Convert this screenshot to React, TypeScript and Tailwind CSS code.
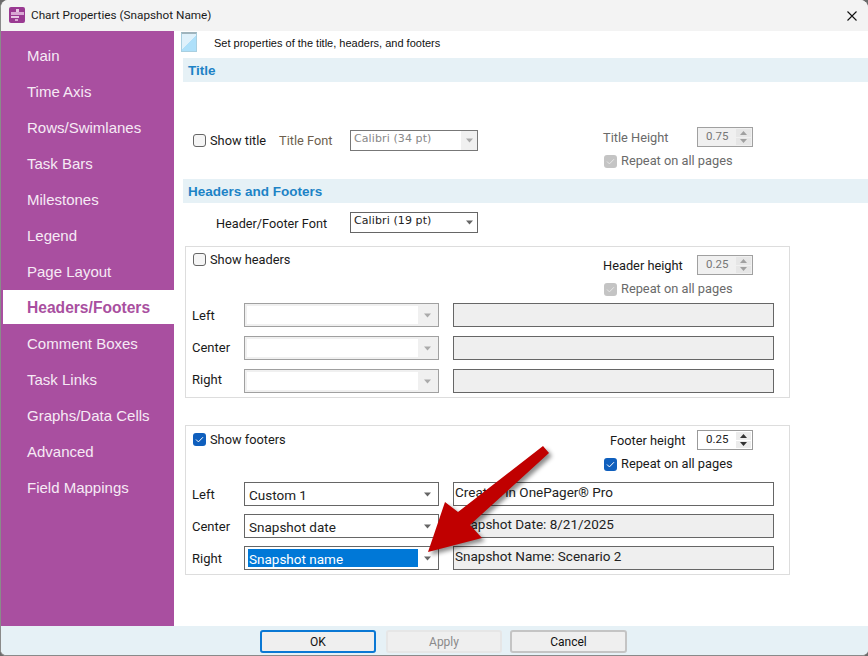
// App.tsx
const navItems = [
  "Main",
  "Time Axis",
  "Rows/Swimlanes",
  "Task Bars",
  "Milestones",
  "Legend",
  "Page Layout",
  "Headers/Footers",
  "Comment Boxes",
  "Task Links",
  "Graphs/Data Cells",
  "Advanced",
  "Field Mappings",
];

const Caret = ({ disabled = false }: { disabled?: boolean }) => (
  <svg width="9" height="5" viewBox="0 0 9 5" className="shrink-0">
    <path d="M1 0.5h7L4.5 4.5z" fill={disabled ? "#aaaaaa" : "#666666"} />
  </svg>
);

const Check = ({ checked = false, disabled = false }: { checked?: boolean; disabled?: boolean }) => {
  if (!checked) {
    return <span className="block h-[13px] w-[13px] shrink-0 rounded-[3px] border border-[#666666] bg-[#f5f5f5]" />;
  }
  return (
    <span
      className={`flex h-[13px] w-[13px] shrink-0 items-center justify-center rounded-[3px] ${
        disabled ? "bg-[#c4c4c4]" : "bg-[#0f5fbd]"
      }`}
    >
      <svg width="9" height="7" viewBox="0 0 9 7">
        <path d="M1 3.5l2.4 2.4L8 1.2" fill="none" stroke={disabled ? "#e8e8e8" : "#ffffff"} strokeWidth="1" />
      </svg>
    </span>
  );
};

const Spinner = ({ value, disabled = false }: { value: string; disabled?: boolean }) => (
  <div
    className={`flex h-5 w-14 items-center border pl-[8px] pr-[1px] ${
      disabled ? "border-[#a0a0a0] bg-[#f0f0f0] text-[#777777]" : "border-[#9a9a9a] bg-white text-[#222222]"
    }`}
  >
    <span className="w-[22px] text-center text-[11.5px] leading-none">{value}</span>
    <div className="ml-auto flex h-full w-[15px] flex-col justify-center gap-[1px] py-[1px]">
      <div className={`flex flex-1 items-center justify-center ${disabled ? "bg-[#e6e6e6]" : "bg-[#ececec]"}`}>
        <svg width="7" height="4" viewBox="0 0 7 4">
          <path d="M3.5 0L7 4H0z" fill={disabled ? "#a0a0a0" : "#333333"} />
        </svg>
      </div>
      <div className={`flex flex-1 items-center justify-center ${disabled ? "bg-[#e6e6e6]" : "bg-[#ececec]"}`}>
        <svg width="7" height="4" viewBox="0 0 7 4">
          <path d="M0 0h7L3.5 4z" fill={disabled ? "#a0a0a0" : "#333333"} />
        </svg>
      </div>
    </div>
  </div>
);

const FontCombo = ({ label, disabled = false }: { label: string; disabled?: boolean }) => (
  <div
    className={`flex h-[21px] w-[128px] border bg-white ${disabled ? "border-[#777777]" : "border-[#666666]"}`}
  >
    <span
      className={`flex-1 pl-[3px] pt-[1px] font-['DejaVu_Sans',sans-serif] text-[11px] leading-[14px] tracking-[0.1px] ${
        disabled ? "text-[#888888]" : "text-[#222222]"
      }`}
    >
      {label}
    </span>
    <span className={`flex w-[16px] items-center justify-center ${disabled ? "bg-[#f0f0f0]" : ""}`}>
      <Caret disabled={disabled} />
    </span>
  </div>
);

const Combo = ({ value, selected = false, disabled = false }: { value?: string; selected?: boolean; disabled?: boolean }) => (
  <div
    className={`flex h-6 w-[195px] items-center border p-[2px] ${
      disabled ? "border-[#a0a0a0] bg-[#f0f0f0]" : "border-[#666666] bg-white"
    }`}
  >
    <span
      className={`h-[18px] flex-1 pt-[1px] text-[13.5px] leading-[18px] ${
        selected ? "ml-[1px] bg-[#0078d7] pl-[1px] text-white" : disabled ? "bg-white" : "pl-[2px] text-[#222222]"
      }`}
    >
      {value}
    </span>
    <span className="flex w-[18px] items-center justify-center">
      <Caret disabled={disabled} />
    </span>
  </div>
);

const Field = ({ value, readOnly = true }: { value?: string; readOnly?: boolean }) => (
  <div
    className={`ml-[14px] h-6 w-[321px] border border-[#666666] pl-[1px] text-[13.5px] leading-[19px] text-[#222222] ${
      readOnly ? "bg-[#efefef]" : "bg-white"
    }`}
  >
    {value}
  </div>
);

const Row = ({ label, labelClass = "", children }: { label: string; labelClass?: string; children: React.ReactNode }) => (
  <div className="flex items-center">
    <span className={`w-[52px] text-[13px] leading-none text-[#1a1a1a] ${labelClass}`}>{label}</span>
    {children}
  </div>
);

const Band = ({ label }: { label: string }) => (
  <div className="ml-[9px] h-6 bg-[#e6f1f6] pl-[5px] pt-[1px] text-[13.5px] font-bold leading-[24px] text-[#1d83c6] font-['Liberation_Sans',sans-serif]">
    {label}
  </div>
);

const Repeat = ({ checked = false, disabled = false }: { checked?: boolean; disabled?: boolean }) => (
  <div className={`mt-2 flex items-center gap-1 pl-[1px] text-[12.8px] leading-none ${disabled ? "text-[#6a6a6a]" : "text-[#1a1a1a]"}`}>
    <Check checked={checked} disabled={disabled} />
    <span>Repeat on all pages</span>
  </div>
);

const DialogButton = ({ label, className }: { label: string; className: string }) => (
  <button className={`h-[23px] rounded-[3px] border-2 bg-[#efefef] text-[12px] leading-none ${className}`}>
    {label}
  </button>
);

export default function App() {
  return (
    <div className="relative h-[656px] w-[868px] overflow-hidden bg-[#6b6b6b] font-['Roboto','Noto_Sans',sans-serif]">
      <div className="flex h-full flex-col overflow-hidden rounded-t-[8px] rounded-b-[6px] border-b border-l border-[#8a8a8a] bg-white">
        {/* title bar */}
        <div className="flex h-[31px] shrink-0 items-center bg-[#f3f3f3] pl-2 pr-[10px]">
          <svg width="17" height="17" viewBox="0 0 17 17">
            <rect width="16" height="16" rx="2" fill="#9a3a92" />
            <rect x="7" y="2" width="3" height="3" fill="#e8c8e4" />
            <rect x="2" y="5" width="13" height="3" fill="#d9a8d4" />
            <rect x="2" y="9" width="8" height="2" fill="#e8c8e4" />
            <rect x="6" y="12" width="3" height="2" fill="#d9a8d4" />
          </svg>
          <span className="ml-[5px] text-[11.75px] text-[#1a1a1a]">Chart Properties (Snapshot Name)</span>
          <svg width="10" height="10" viewBox="0 0 10 10" className="ml-auto mr-[1px]">
            <path d="M0.5 0.5l9 9M9.5 0.5l-9 9" stroke="#111111" strokeWidth="1.1" />
          </svg>
        </div>

        <div className="flex min-h-0 flex-1">
          {/* sidebar */}
          <nav className="w-[173px] shrink-0 bg-[#a94fa0] pt-[7px] font-['Liberation_Sans',sans-serif]">
            {navItems.map((item) =>
              item === "Headers/Footers" ? (
                <div key={item} className="mb-[2px] ml-[2px] h-[34px] bg-white pl-6 text-[15.6px] font-bold leading-[36px] text-[#a94fa0]">
                  {item}
                </div>
              ) : (
                <div key={item} className="h-9 pl-[26px] text-[15px] leading-[36px] text-[#f6eaf5]">
                  {item}
                </div>
              ),
            )}
          </nav>

          {/* main panel */}
          <main className="min-w-0 flex-1">
            <div className="flex h-[27px] items-start pl-[7px] pt-[1px]">
              <div className="h-[20px] w-[16px] border border-[#a9cfe0] border-t-2 border-t-[#9fb4bd] bg-[linear-gradient(135deg,#dff1fb_50%,#aee0fa_50%)]" />
              <span className="ml-[17px] pt-[5px] font-['Liberation_Sans',sans-serif] text-[11px] leading-[13px] text-[#111111]">
                Set properties of the title, headers, and footers
              </span>
            </div>

            <Band label="Title" />

            {/* title options */}
            <div className="ml-[19px] mt-[45px] flex h-[41px] items-start">
              <div className="flex h-[27px] items-center text-[12.8px]">
                <Check />
                <span className="ml-1 w-[69px] pt-[2px] leading-none text-[#1a1a1a]">Show title</span>
                <span className="w-[71px] pt-[2px] leading-none text-[#6e5f4e]">Title Font</span>
                <FontCombo label="Calibri (34 pt)" disabled />
              </div>
              <div className="ml-[125px] flex flex-col">
                <div className="flex items-center">
                  <span className="w-[94px] pt-[2px] text-[12.8px] leading-none text-[#6a6a6a]">Title Height</span>
                  <Spinner value="0.75" disabled />
                </div>
                <Repeat checked disabled />
              </div>
            </div>

            <div className="mt-[11px]">
              <Band label="Headers and Footers" />
            </div>

            <div className="mt-[9px] flex items-center pl-[42px]">
              <span className="w-[134px] pt-[3px] text-[12.7px] leading-none text-[#1a1a1a]">Header/Footer Font</span>
              <FontCombo label="Calibri (19 pt)" />
            </div>

            {/* headers group */}
            <section className="ml-[11px] mt-[13px] h-[152px] w-[605px] border border-[#dddddd] pl-[6px]">
              <div className="flex h-[56px]">
                <div className="ml-[1px] flex items-start gap-1 pt-[6px] text-[12.8px] leading-none text-[#1a1a1a]">
                  <Check />
                  <span className="pt-px">Show headers</span>
                </div>
                <div className="ml-auto mr-[36px] flex w-[150px] flex-col pt-2">
                  <div className="flex items-center">
                    <span className="w-[94px] pt-[2px] text-[12.8px] leading-none text-[#1a1a1a]">Header height</span>
                    <Spinner value="0.25" disabled />
                  </div>
                  <Repeat checked disabled />
                </div>
              </div>
              <div className="flex flex-col gap-[9px]">
                <Row label="Left">
                  <Combo disabled />
                  <Field />
                </Row>
                <Row label="Center" labelClass="pb-[2px]">
                  <Combo disabled />
                  <Field />
                </Row>
                <Row label="Right" labelClass="pb-1">
                  <Combo disabled />
                  <Field />
                </Row>
              </div>
            </section>

            {/* footers group */}
            <section className="ml-[11px] mt-[27px] h-[150px] w-[605px] border border-[#dddddd] pl-[6px]">
              <div className="flex h-[56px]">
                <div className="ml-[1px] flex items-start gap-1 pt-[7px] text-[12.8px] leading-none text-[#1a1a1a]">
                  <Check checked />
                  <span className="pt-px">Show footers</span>
                </div>
                <div className="ml-auto mr-[36px] flex w-[150px] flex-col pt-1">
                  <div className="flex items-center">
                    <span className="w-[94px] pl-[7px] pt-[2px] text-[12.8px] leading-none text-[#1a1a1a]">Footer height</span>
                    <Spinner value="0.25" />
                  </div>
                  <Repeat checked />
                </div>
              </div>
              <div className="flex flex-col gap-2">
                <Row label="Left">
                  <Combo value="Custom 1" />
                  <Field value="Created in OnePager® Pro" readOnly={false} />
                </Row>
                <Row label="Center">
                  <Combo value="Snapshot date" />
                  <Field value="Snapshot Date: 8/21/2025" />
                </Row>
                <Row label="Right">
                  <Combo value="Snapshot name" selected />
                  <Field value="Snapshot Name: Scenario 2" />
                </Row>
              </div>
            </section>
          </main>
        </div>

        {/* button bar */}
        <footer className="flex h-[29px] shrink-0 items-center bg-[#e6f1f6] pl-[259px] pt-[2px]">
          <DialogButton label="OK" className="w-[116px] border-[#0a78d4] text-[#111111]" />
          <DialogButton label="Apply" className="ml-[10px] w-[116px] border-[#e6e6e6] text-[#8a8a8a]" />
          <DialogButton label="Cancel" className="ml-2 w-[117px] border-[#c4c4c4] text-[#111111]" />
        </footer>
      </div>

      {/* red callout arrow */}
      <svg width="868" height="656" viewBox="0 0 868 656" className="pointer-events-none absolute left-0 top-0 drop-shadow-[3px_3px_2px_rgba(0,0,0,0.45)]">
        <polygon
          points="428,552 445,502 458,512 543,446 549,453 470,525 482,538"
          fill="#c00000"
        />
      </svg>
    </div>
  );
}
